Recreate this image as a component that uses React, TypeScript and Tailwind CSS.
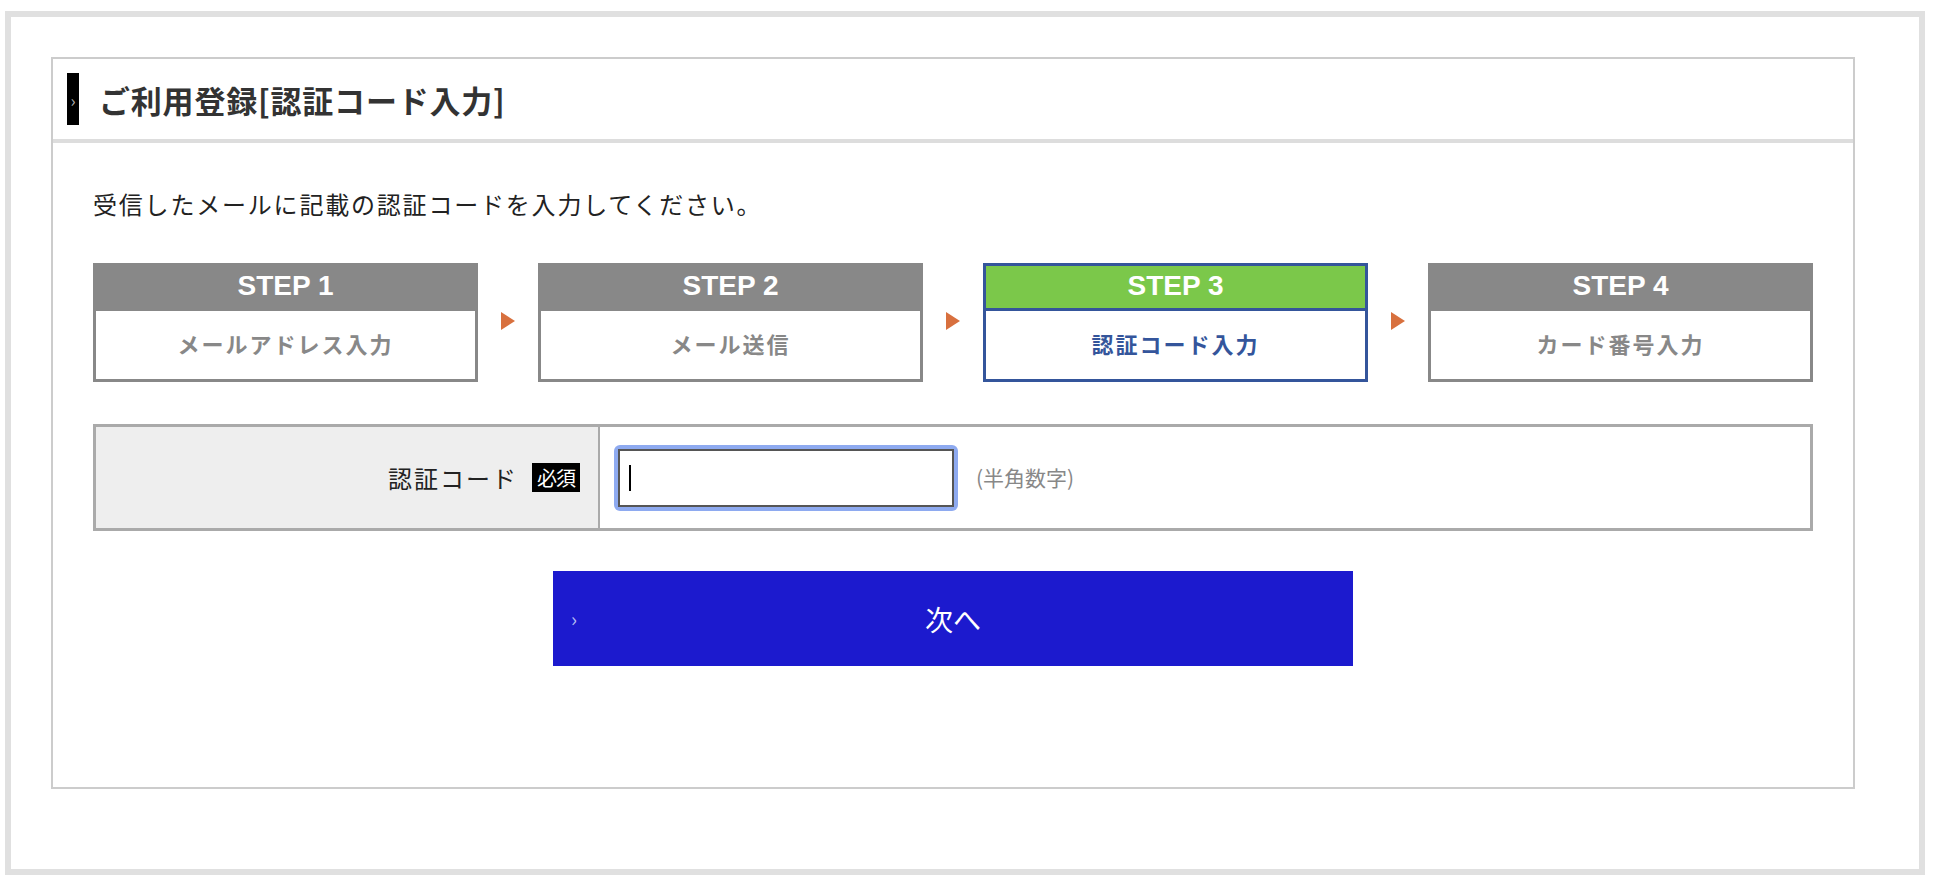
const steps = [
  { label: 'STEP 1', title: 'メールアドレス入力', active: false },
  { label: 'STEP 2', title: 'メール送信', active: false },
  { label: 'STEP 3', title: '認証コード入力', active: true },
  { label: 'STEP 4', title: 'カード番号入力', active: false },
];

const jp = { fontFamily: '"Noto Sans CJK JP", "Noto Sans", sans-serif' };

function StepBox({ label, title, active }: { label: string; title: string; active: boolean }) {
  return (
    <div
      className={
        active
          ? 'w-[385px] h-[119px] border-[3px] border-[#34559b] flex flex-col bg-white'
          : 'w-[385px] h-[119px] border-[3px] border-[#888888] flex flex-col bg-white'
      }
    >
      <div
        className={
          active
            ? 'h-[45px] border-b-[3px] border-[#34559b] bg-[#7bc84a] flex items-center justify-center pb-[3px]'
            : 'h-[45px] border-b-[3px] border-[#888888] bg-[#888888] flex items-center justify-center pb-[3px]'
        }
      >
        <span className="text-white font-bold text-[28px] leading-none font-['Liberation_Sans',sans-serif]">
          {label}
        </span>
      </div>
      <div className="flex-1 flex items-center justify-center pb-[4px]">
        <span
          className={
            active
              ? 'text-[22px] font-bold tracking-[2px] text-[#34559b]'
              : 'text-[22px] font-bold tracking-[2px] text-[#888888]'
          }
        >
          {title}
        </span>
      </div>
    </div>
  );
}

function Arrow() {
  return (
    <div className="flex-1 flex justify-center pb-[4px]">
      <svg width="14" height="18" viewBox="0 0 14 18">
        <polygon points="0,0 14,9 0,18" fill="#d8703e" />
      </svg>
    </div>
  );
}

export default function App() {
  return (
    <div className="bg-white w-[1933px] h-[889px] pt-[11px] pl-[5px]" style={jp}>
      <div className="w-[1920px] h-[864px] border-[6px] border-[#e0e0e0] pt-[40px] pl-[40px]">
        <section className="w-[1804px] h-[732px] border-2 border-[#cccccc]">
          {/* title */}
          <div className="h-[84px] border-b-4 border-[#dddddd] flex items-center pl-[14px]">
            <div className="w-[12px] h-[52px] bg-black flex items-center justify-center">
              <span className="text-[#b5b5b5] text-[17px] leading-none">›</span>
            </div>
            <h1 className="ml-[20px] text-[31px] font-bold tracking-[0.8px] text-[#333333] leading-none">
              ご利用登録[認証コード入力]
            </h1>
          </div>

          <div className="px-[40px] pt-[44px]">
            <p className="text-[24px] leading-[34px] tracking-[1.8px] text-[#222222]">
              受信したメールに記載の認証コードを入力してください。
            </p>

            <div className="mt-[42px] flex items-center">
              {steps.map((s, i) => (
                <div key={i} className={i < steps.length - 1 ? 'flex-1 flex items-center' : 'flex items-center'}>
                  <StepBox label={s.label} title={s.title} active={s.active} />
                  {i < steps.length - 1 && <Arrow />}
                </div>
              ))}
            </div>

            <div className="mt-[42px] h-[107px] border-[3px] border-[#aaaaaa] flex">
              <div className="w-[504px] bg-[#eeeeee] border-r-2 border-[#aaaaaa] flex items-center justify-end pr-[18px]">
                <span className="text-[24px] tracking-[2px] text-[#222222]">認証コード</span>
                <span className="ml-[14px] bg-black text-white text-[20px] leading-[29px] px-[5px] tracking-[-1px]">
                  必須
                </span>
              </div>
              <div className="flex-1 flex items-center pl-[14px]">
                <div className="relative w-[344px] h-[66px] rounded-[6px] bg-[#8eaaf0] p-[4px]">
                  <input
                    type="text"
                    className="w-full h-full border-2 border-[#555555] bg-white outline-none px-[10px] text-[22px]"
                  />
                  <span className="absolute left-[15px] top-[20px] w-[2px] h-[26px] bg-black" />
                </div>
                <span className="ml-[18px] text-[21px] text-[#888888]">(半角数字)</span>
              </div>
            </div>

            <button
              type="button"
              className="relative mt-[40px] mx-auto w-[800px] h-[95px] bg-[#1c1ace] flex items-center justify-center"
            >
              <span className="absolute left-[18px] text-[#b4baf2] text-[20px] leading-none">›</span>
              <span className="text-white text-[28px] leading-none">次へ</span>
            </button>
          </div>
        </section>
      </div>
    </div>
  );
}
